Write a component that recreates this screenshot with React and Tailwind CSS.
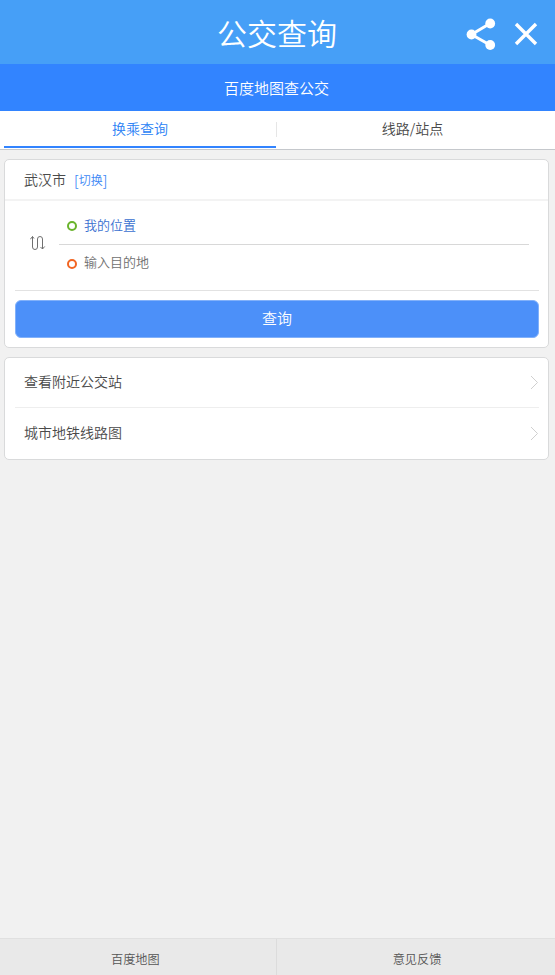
import React from "react";

const FONT = "font-['Noto_Sans_CJK_SC',sans-serif] font-[350]";

function ShareIcon() {
  return (
    <svg className="mt-[3px]" width="30" height="32" viewBox="0 0 30 32" fill="#fff">
      <path d="M24 5.500 5.500 16.500l18.500 10.500" fill="none" stroke="#fff" strokeWidth="3" />
      <circle cx="24.200" cy="5.500" r="4.900" />
      <circle cx="5.500" cy="16.500" r="4.900" />
      <circle cx="24.200" cy="27" r="4.900" />
    </svg>
  );
}

function CloseIcon() {
  return (
    <svg className="mt-1" width="24" height="24" viewBox="0 0 24 24" fill="none" stroke="#fff" strokeWidth="3.400">
      <path d="m2 2 20 20M22 2 2 22" />
    </svg>
  );
}

function SwapIcon() {
  return (
    <svg width="16" height="16" viewBox="0 0 16 16" fill="none" stroke="#707070" strokeWidth="1">
      <path d="M.3 4.300 2.500 1.500V12a2.500 2.500 0 0 0 5 0V4a2.500 2.500 0 0 1 5 0V14l2.200-2.500M12.500 14l-2-2" />
      <path d="M2.500 1.500l1.500 2" />
    </svg>
  );
}

function Chevron() {
  return (
    <svg width="9" height="15" viewBox="0 0 9 15" fill="none" stroke="#d0d0d0">
      <path d="m1 1 6.500 6.500L1 14" />
    </svg>
  );
}

function LinkRow({ label, className }) {
  return (
    <div className={"flex items-center justify-between pl-[9px] " + className}>
      <span className="mb-[3px]">{label}</span>
      <Chevron />
    </div>
  );
}

export default function App() {
  return (
    <div className={"flex h-[975px] w-[555px] flex-col overflow-hidden bg-[#f1f1f1] text-[14px] leading-5 text-[#4a4a4a] " + FONT}>
      <header className="flex h-16 shrink-0 items-center bg-[#469ff7] text-white">
        <h1 className="ml-[217px] w-[249px] text-[30px] leading-10 font-[350]">公交查询</h1>
        <ShareIcon />
        <div className="ml-[18px]"><CloseIcon /></div>
      </header>
      <div className="flex h-[47px] shrink-0 items-center justify-center bg-[#3284ff] pr-[2px] text-[15px] text-white">
        百度地图查公交
      </div>
      <nav className="flex h-[39px] shrink-0 border-b border-[#c5c8cc] bg-white px-1">
        <div className="flex h-[37px] w-[272px] justify-center border-b-2 border-[#3284ff] pt-[7px] text-[#2a7ff5]">换乘查询</div>
        <div className="mt-[11px] h-[15px] w-px bg-[#e6e6e6]" />
        <div className="flex-1 pt-[7px] pr-[3px] text-center">线路/站点</div>
      </nav>

      <section className="mt-[9px] ml-1 h-[189px] w-[545px] shrink-0 rounded-[5px] border border-[#d9dadb] bg-white">
        <div className="flex h-[41px] items-center border-b-2 border-[#f3f3f3] pb-px pl-[19px]">
          <span>武汉市</span>
          <span className="mt-px ml-[8px] flex items-center text-[#3d88f5]">
            [<span className="mt-px text-[12px]">切换</span>]
          </span>
        </div>
        <div className="ml-[10px] flex h-[90px] w-[524px] border-b border-[#e2e2e2]">
          <div className="w-11 pt-[34px] pl-[15px]"><SwapIcon /></div>
          <div className="w-[470px] text-[13px]">
            <div className="flex h-11 items-center border-b border-[#d8d8d8] pl-2 text-[#3a6fd0]">
              <span className="mt-[7px] mr-[7px] h-[10px] w-[10px] rounded-full border-2 border-[#6ab42c]" />
              <span className="mt-[4px]">我的位置</span>
            </div>
            <div className="flex h-9 items-center pl-2 text-[#707070]">
              <span className="mt-[2px] mr-[7px] h-[10px] w-[10px] rounded-full border-2 border-[#f26522]" />
              <span className="mb-[2px]">输入目的地</span>
            </div>
          </div>
        </div>
        <button className="mx-[10px] mt-[9px] block h-[38px] w-[524px] rounded-[6px] border border-[#82b1fa] bg-[#4c90f9] pb-[2px] text-[15px] text-white">
          查询
        </button>
      </section>

      <section className="mt-[9px] ml-1 h-[103px] w-[545px] shrink-0 rounded-[5px] border border-[#d9dadb] bg-white pr-[9px] pl-[10px]">
        <LinkRow label="查看附近公交站" className="h-[50px] border-b border-[#eee]" />
        <LinkRow label="城市地铁线路图" className="h-[51px]" />
      </section>

      <footer className="mt-auto flex h-[37px] shrink-0 border-t border-[#e0e0e0] bg-[#e9e9e9] text-[12.200px] text-[#555]">
        <div className="w-[277px] border-r border-[#dcdcdc] pt-[10px] pl-[111px]">百度地图</div>
        <div className="flex-1 pt-[10px] pl-[2px] text-center">意见反馈</div>
      </footer>
    </div>
  );
}
